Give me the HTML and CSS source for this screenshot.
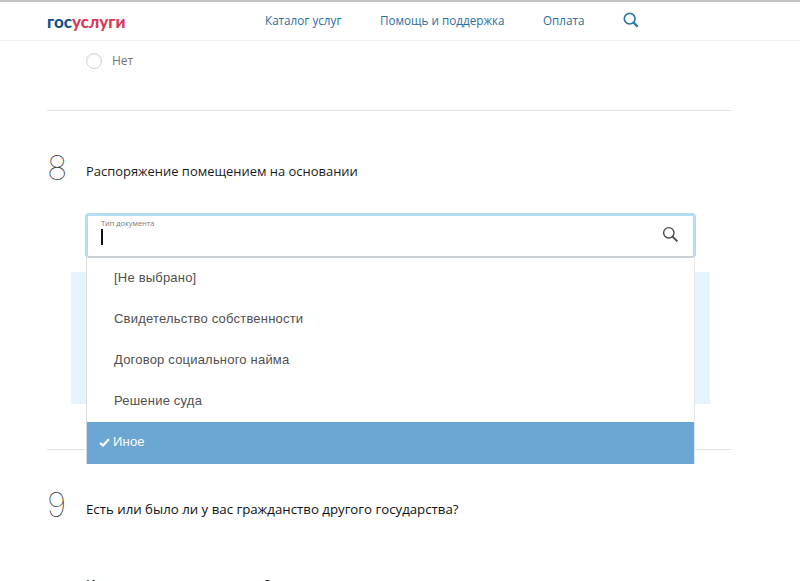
FILE: index.html
```html
<!DOCTYPE html>
<html lang="ru">
<head>
<meta charset="utf-8">
<title>Госуслуги</title>
<link rel="stylesheet" href="styles.css">
</head>
<body>
<header class="header">
  <a class="logo"><span class="logo-a">гос</span><span class="logo-b">услуги</span></a>
  <nav class="nav">
    <a>Каталог услуг</a>
    <a>Помощь и поддержка</a>
    <a>Оплата</a>
    <svg class="nav-search" width="16" height="16" viewBox="0 0 18 18" fill="none" stroke="#2b78ad" stroke-width="1.9"><circle cx="7.5" cy="7.5" r="6"/><path d="M12 12 16.6 16.6" stroke-width="2.6"/></svg>
  </nav>
</header>
<main class="main">
  <div class="radio-row"><span class="radio"></span><span class="radio-label">Нет</span></div>
  <hr class="rule rule-first">
  <section class="question q8">
    <span class="num">8</span><span class="q-text">Распоряжение помещением на основании</span>
  </section>
  <div class="field-area">
    <div class="info-box"></div>
    <div class="combo">
      <div class="input">
        <span class="input-label">Тип документа</span>
        <span class="caret"></span>
        <svg class="input-search" width="17" height="17" viewBox="0 0 17 17" fill="none" stroke="#4a4a4a" stroke-width="1.4"><circle cx="6.8" cy="6.8" r="5.2"/><path d="M10.6 10.6 15.4 15.4" stroke-width="2"/></svg>
      </div>
      <ul class="list">
        <li>[Не выбрано]</li>
        <li>Свидетельство собственности</li>
        <li>Договор социального найма</li>
        <li>Решение суда</li>
        <li class="selected"><svg class="check" width="11" height="9" viewBox="0 0 10 8" fill="none" stroke="#fff" stroke-width="2"><path d="M1 4.4 3.6 6.8 9 1"/></svg>Иное</li>
      </ul>
    </div>
  </div>
  <hr class="rule rule-second">
  <section class="question q9">
    <span class="num">9</span><span class="q-text">Есть или было ли у вас гражданство другого государства?</span>
  </section>
  <p class="clipped">Имеется ли это гражданство?</p>
</main>
</body>
</html>
```
FILE: styles.css
```css
* { box-sizing: border-box; }
html, body { margin: 0; height: 581px; overflow: hidden; background: #fff; }
body { font-family: "Open Sans", "Noto Sans", sans-serif; color: #1b1b1b; }
.header {
  height: 41px;
  border-top: 2px solid #c4c4c4;
  border-bottom: 1px solid #f0f0f0;
  padding: 0 0 0 47px;
  display: flex;
  align-items: center;
}
.logo { font-family: "Lato", sans-serif; font-weight: 900; font-size: 17px; letter-spacing: 0; width: 218px; line-height: 1; }
.logo-a { color: #17508c; }
.logo-b { color: #d93a56; }
.nav { display: flex; align-items: center; gap: 38.5px; font-size: 11.7px; color: #2b6f9f; margin-top: -2px; }
.main { padding: 0 68px 0 47px; }
.radio-row { display: flex; align-items: center; height: 39px; padding-left: 39px; gap: 10px; }
.radio { width: 16px; height: 16px; border-radius: 50%; border: 1px solid #d4d4d4; box-shadow: inset 0 1px 2px #eee; }
.radio-label { font-size: 12px; color: #777; }
.rule { border: 0; border-top: 1px solid #e3e3e3; margin: 0; }
.rule-first { margin-top: 30px; }
.question { display: flex; align-items: flex-start; }
.q8 { margin-top: 40px; height: 64px; }
.q9 { margin-top: 38px; height: 88px; }
.num { font-family: "Inter", sans-serif; font-weight: 100; font-size: 34px; line-height: 33px; width: 39px; color: #333; }
.q-text { line-height: 18px; margin-top: 11px; }
.q8 .q-text { font-size: 12.95px; color: #1b1b1b; }
.q9 .q-text { font-size: 13.25px; color: #111; margin-top: 12px; }
.field-area { position: relative; height: 234px; }
.info-box { position: absolute; left: 24px; top: 57px; width: 639px; height: 132px; background: #e3f4fe; }
.combo { position: absolute; left: 39px; top: 0; width: 609px; z-index: 1; }
.input {
  position: relative;
  height: 45px;
  margin: -2px -1px 0;
  background: #fff;
  border: 3px solid #b4dcf2;
  border-bottom: 2px solid #c9cfd3;
  border-radius: 4px;
}
.input-label { position: absolute; left: 13px; top: 2px; font-size: 7.4px; line-height: 10px; color: #777; }
.caret { position: absolute; left: 13px; top: 13px; width: 1.5px; height: 16px; background: #111; }
.input-search { position: absolute; right: 14px; top: 10px; }
.list {
  list-style: none;
  margin: 0;
  padding: 0;
  background: #fff;
  border-left: 1px solid #dcdcdc;
  border-right: 1px solid #e6e6e6;
  font-family: "Liberation Sans", sans-serif;
  font-size: 13px;
  color: #505050;
  letter-spacing: .2px;
}
.list li { height: 41px; line-height: 39px; padding-left: 27px; position: relative; }
.list .selected { background: #6ba7d2; color: #fff; padding-left: 26px; height: 42px; }
.check { position: absolute; left: 12px; top: 16px; }
.clipped { margin: 0 0 0 39px; font-size: 12.3px; font-weight: 600; line-height: 18px; }
```
